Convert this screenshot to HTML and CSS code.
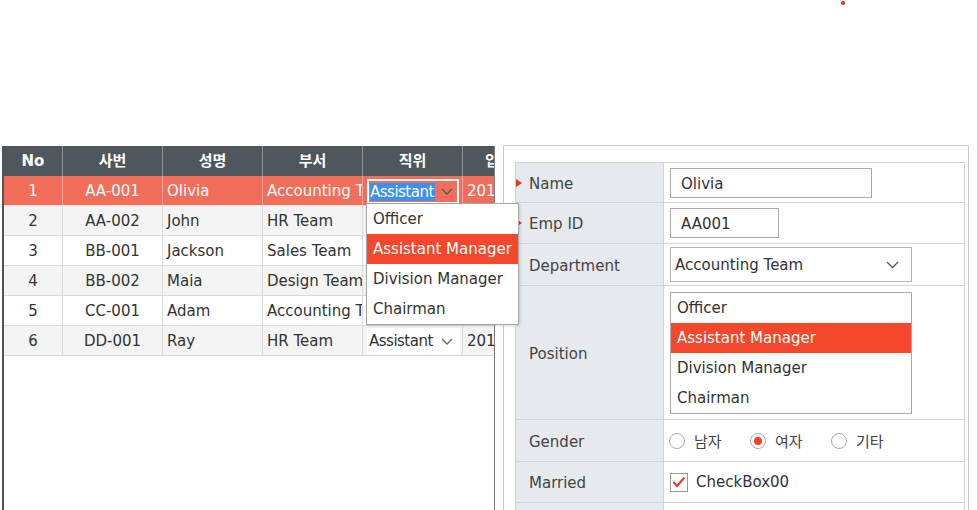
FILE: index.html
```html
<!DOCTYPE html>
<html lang="ko">
<head>
    <meta charset="UTF-8">
    <meta name="viewport" content="width=device-width, initial-scale=1.0">
    <title>Employee Grid</title>
    <link rel="stylesheet" href="styles.css">
</head>
<body>

    <div class="topbar"><span class="dot"></span></div>

    <div class="main">
        <div class="grid">
            <div class="grid-inner">
                <div class="grow ghead">
                    <div class="gc">No</div>
                    <div class="gc">사번</div>
                    <div class="gc">성명</div>
                    <div class="gc">부서</div>
                    <div class="gc">직위</div>
                    <div class="gc">입사일자</div>
                </div>
                <div class="grow selected">
                    <div class="gc c">1</div>
                    <div class="gc c">AA-001</div>
                    <div class="gc">Olivia</div>
                    <div class="gc">Accounting Team</div>
                    <div class="gc edit">
                        <div class="cell-select active">
                            <span class="sel-text">Assistant</span>
                            <svg class="chev" width="12" height="7" viewBox="0 0 12 7"><polyline points="1,1 6,6 11,1" fill="none" stroke="#555" stroke-width="1.3"/></svg>
                        </div>
                    </div>
                    <div class="gc">2019-03-02</div>
                </div>
                <div class="grow">
                    <div class="gc c">2</div>
                    <div class="gc c">AA-002</div>
                    <div class="gc">John</div>
                    <div class="gc">HR Team</div>
                    <div class="gc"></div>
                    <div class="gc">2017-06-12</div>
                </div>
                <div class="grow">
                    <div class="gc c">3</div>
                    <div class="gc c">BB-001</div>
                    <div class="gc">Jackson</div>
                    <div class="gc">Sales Team</div>
                    <div class="gc"></div>
                    <div class="gc">2018-01-15</div>
                </div>
                <div class="grow">
                    <div class="gc c">4</div>
                    <div class="gc c">BB-002</div>
                    <div class="gc">Maia</div>
                    <div class="gc">Design Team</div>
                    <div class="gc"></div>
                    <div class="gc">2016-09-01</div>
                </div>
                <div class="grow">
                    <div class="gc c">5</div>
                    <div class="gc c">CC-001</div>
                    <div class="gc">Adam</div>
                    <div class="gc">Accounting Team</div>
                    <div class="gc"></div>
                    <div class="gc">2015-04-20</div>
                </div>
                <div class="grow">
                    <div class="gc c">6</div>
                    <div class="gc c">DD-001</div>
                    <div class="gc">Ray</div>
                    <div class="gc">HR Team</div>
                    <div class="gc edit">
                        <div class="cell-select">
                            <span>Assistant</span>
                            <svg class="chev" width="12" height="7" viewBox="0 0 12 7"><polyline points="1,1 6,6 11,1" fill="none" stroke="#666" stroke-width="1.3"/></svg>
                        </div>
                    </div>
                    <div class="gc">2014-11-03</div>
                </div>
            </div>

            <ul class="dropdown">
                <li>Officer</li>
                <li class="on">Assistant Manager</li>
                <li>Division Manager</li>
                <li>Chairman</li>
            </ul>
        </div>

        <div class="panel">
            <div class="form">
                <div class="frow h40">
                    <div class="flabel req">Name</div>
                    <div class="fvalue"><div class="input w-name">Olivia</div></div>
                </div>
                <div class="frow h41">
                    <div class="flabel req">Emp ID</div>
                    <div class="fvalue"><div class="input w-id">AA001</div></div>
                </div>
                <div class="frow h42">
                    <div class="flabel">Department</div>
                    <div class="fvalue">
                        <div class="combo">
                            <span>Accounting Team</span>
                            <svg width="13" height="8" viewBox="0 0 13 8"><polyline points="1,1 6.5,6.5 12,1" fill="none" stroke="#555" stroke-width="1.3"/></svg>
                        </div>
                    </div>
                </div>
                <div class="frow h134">
                    <div class="flabel">Position</div>
                    <div class="fvalue">
                        <ul class="listbox">
                            <li>Officer</li>
                            <li class="on">Assistant Manager</li>
                            <li>Division Manager</li>
                            <li>Chairman</li>
                        </ul>
                    </div>
                </div>
                <div class="frow h42">
                    <div class="flabel">Gender</div>
                    <div class="fvalue radios">
                        <label class="radio"><span class="circle"></span>남자</label>
                        <label class="radio"><span class="circle checked"></span>여자</label>
                        <label class="radio"><span class="circle"></span>기타</label>
                    </div>
                </div>
                <div class="frow h41">
                    <div class="flabel">Married</div>
                    <div class="fvalue">
                        <span class="checkbox">
                            <svg width="14" height="12" viewBox="0 0 14 12"><polyline points="1.5,6 5,10 12.5,1.5" fill="none" stroke="#e8442a" stroke-width="2.2"/></svg>
                        </span>
                        CheckBox00
                    </div>
                </div>
                <div class="frow last">
                    <div class="flabel"></div>
                    <div class="fvalue"></div>
                </div>
            </div>
        </div>
    </div>

</body>
</html>
```

FILE: styles.css
```css
body {
    margin: 0;
    font-family: "DejaVu Sans", "Noto Sans CJK KR", sans-serif;
    font-size: 15px;
    color: #333;
    background: #fff;
    overflow: hidden;
}

.topbar {
    height: 145px;
    box-sizing: border-box;
    padding: 1px 0 0 841px;
}

.dot {
    display: block;
    width: 4px;
    height: 4px;
    border-radius: 50%;
    background: #e52222;
}

.main {
    display: flex;
    align-items: flex-start;
}

/* left grid */
.grid {
    position: relative;
    margin: 1px 0 0 2px;
    width: 493px;
    height: 364px;
    box-sizing: border-box;
    border-left: 2px solid #4f565b;
    border-right: 1px solid #7d7d7d;
    z-index: 2;
}

.grid-inner {
    width: 100%;
    height: 100%;
    overflow: hidden;
}

.grow {
    display: grid;
    grid-template-columns: 59px 100px 100px 100px 100px 100px;
    height: 30px;
}

.gc {
    box-sizing: border-box;
    border-right: 1px solid #d9d9d9;
    border-bottom: 1px solid #d9d9d9;
    padding: 1px 0 0 4px;
    line-height: 28px;
    white-space: nowrap;
    overflow: hidden;
}

.gc.c {
    text-align: center;
    padding-left: 0;
}

.ghead .gc {
    background: #50575c;
    color: #fff;
    font-weight: bold;
    text-align: center;
    padding: 0;
    border-bottom: none;
    border-right-color: #8e9397;
    line-height: 30px;
}

.grow:nth-child(odd):not(.ghead) .gc {
    background: #f4f4f4;
}

.grow.selected .gc {
    background: #f26e5b;
    color: #fff;
    border-right-color: #f6a596;
    border-bottom-color: #e8e8e8;
}

.gc.edit {
    padding: 2px 2px 0 4px;
    line-height: normal;
}

.grow .gc.edit .cell-select {
    background: #fff;
}

.cell-select {
    display: flex;
    align-items: center;
    justify-content: space-between;
    height: 26px;
    box-sizing: border-box;
    padding: 0 7px 0 2px;
    letter-spacing: -0.5px;
    color: #333;
    overflow: hidden;
    white-space: nowrap;
}

.grow .gc.edit .cell-select.active {
    width: 92px;
    height: 25px;
    margin-top: 1px;
    border: 2px solid #fff;
    background: #f26e5b;
    padding: 0 4px 0 1px;
}

.sel-text {
    background: #3d8ff5;
    color: #fff;
    line-height: 18px;
    padding-right: 1px;
}

.dropdown {
    position: absolute;
    left: 362px;
    top: 57px;
    width: 153px;
    box-sizing: border-box;
    margin: 0;
    padding: 0;
    list-style: none;
    background: #fff;
    border: 1px solid #a6a6a6;
    box-shadow: 1px 1px 3px rgba(0, 0, 0, 0.15);
}

.dropdown li {
    height: 30px;
    line-height: 31px;
    padding-left: 6px;
    white-space: nowrap;
    overflow: hidden;
}

.dropdown li.on,
.listbox li.on {
    background: #f4472b;
    color: #fff;
}

/* right form panel */
.panel {
    margin-left: 8px;
    width: 466px;
    height: 380px;
    box-sizing: border-box;
    border: 1px solid #c9c9c9;
    padding: 16px 4px 0 11px;
}

.form {
    width: 448px;
    border-top: 1px solid #d3d3d3;
    border-left: 1px solid #d3d3d3;
    border-right: 1px solid #d3d3d3;
}

.frow {
    display: flex;
    box-sizing: border-box;
    border-bottom: 1px solid #d3d3d3;
}

.h40 { height: 40px; }
.h41 { height: 41px; }
.h42 { height: 42px; }
.h134 { height: 134px; }
.frow.last { height: 60px; }

.flabel {
    position: relative;
    box-sizing: border-box;
    width: 148px;
    flex-shrink: 0;
    border-right: 1px solid #d3d3d3;
    background: #e6e9ed;
    padding: 2px 0 0 13px;
    display: flex;
    align-items: center;
    color: #444;
}

.flabel.req::before {
    content: "";
    position: absolute;
    left: 0;
    top: 50%;
    margin-top: -4px;
    border-left: 6px solid #e2381d;
    border-top: 4px solid transparent;
    border-bottom: 4px solid transparent;
}

.fvalue {
    flex: 1;
    display: flex;
    align-items: center;
    padding-left: 6px;
    color: #333;
}

.input {
    box-sizing: border-box;
    height: 30px;
    line-height: 30px;
    border: 1px solid #aaa;
    padding-left: 10px;
}

.w-name { width: 202px; }
.w-id { width: 109px; }

.combo {
    box-sizing: border-box;
    width: 242px;
    height: 35px;
    border: 1px solid #b3b3b3;
    display: flex;
    align-items: center;
    justify-content: space-between;
    padding: 1px 12px 0 4px;
}

.listbox {
    box-sizing: border-box;
    width: 242px;
    margin: 0;
    padding: 0;
    list-style: none;
    border: 1px solid #aaa;
}

.listbox li {
    height: 30px;
    line-height: 31px;
    padding-left: 6px;
}

.radios {
    padding-left: 5px;
}

.radio {
    display: flex;
    align-items: center;
    width: 81px;
    color: #444;
}

.circle {
    position: relative;
    width: 14px;
    height: 14px;
    border: 1px solid #aaa;
    border-radius: 50%;
    margin-right: 9px;
    background: #fff;
}

.circle.checked::after {
    content: "";
    position: absolute;
    left: 3px;
    top: 3px;
    width: 8px;
    height: 8px;
    border-radius: 50%;
    background: #f0432a;
}

.checkbox {
    box-sizing: border-box;
    width: 18px;
    height: 19px;
    border: 1px solid #999;
    display: flex;
    align-items: center;
    justify-content: center;
    margin-right: 8px;
}
```
